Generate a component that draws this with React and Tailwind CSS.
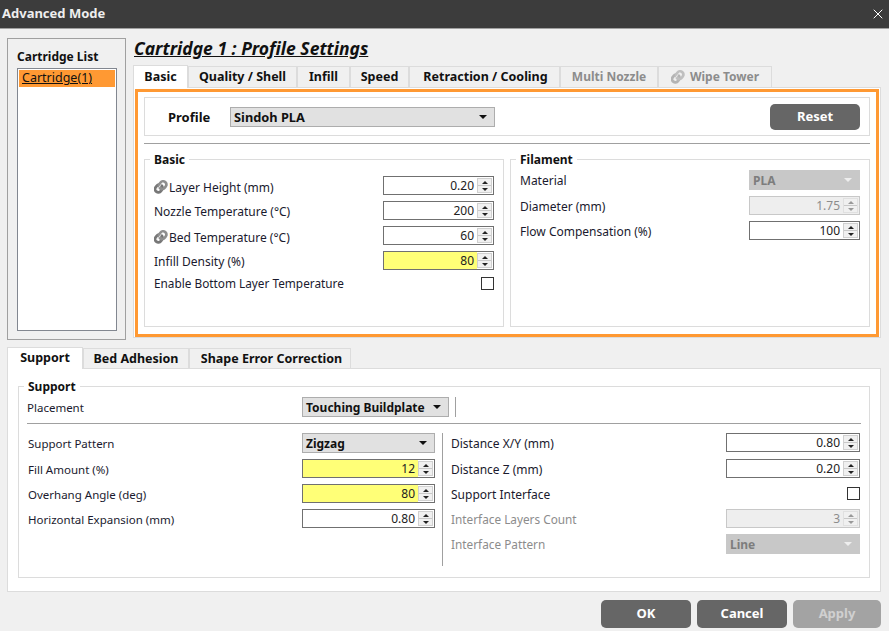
import React from 'react';
import { X } from 'lucide-react';

const FONT = { fontFamily: '"Noto Sans", sans-serif' };

// icono de clip (eslabones diagonales)
const Clip = ({ light }) => (
  <svg width="15" height="16" viewBox="0 0 15 16" className={`shrink-0 ${light ? 'opacity-50' : ''}`}>
    <g transform="rotate(-52 7 8)" fill="none">
      <rect x="0.5" y="4" width="8" height="6.4" rx="3.2" stroke="#777777" strokeWidth="2.8" />
      <rect x="5.5" y="5" width="8" height="6.4" rx="3.2" stroke="#8f8f8f" strokeWidth="2.8" />
      <path d="M2.5 6.5h9" stroke="#e8e8e8" strokeWidth="0.8" />
    </g>
  </svg>
);

const Spin = ({ value, yellow, disabled, className = '' }) => (
  <div className={`flex h-[19px] border ${disabled ? 'border-[#c8c8c8] bg-[#eeeeee] text-[#8c8c8c]' : 'border-[#707070] bg-white text-[#222]'} ${className}`}>
    <div className={`flex-1 text-right pr-[3px] text-[12px] leading-[17px] ${yellow ? 'bg-[#ffff77]' : ''}`}>{value}</div>
    <div className={`w-[15px] my-px mr-px flex flex-col border ${disabled ? 'border-[#e0e0e0]' : 'border-[#d0d0d0]'} bg-[#f0f0f0]`}>
      <div className="flex-1 flex items-center justify-center border-b border-[#c8c8c8]">
        <div className={`w-0 h-0 border-x-[3px] border-x-transparent border-b-[3px] ${disabled ? 'border-b-[#999]' : 'border-b-[#222]'}`} />
      </div>
      <div className="flex-1 flex items-center justify-center">
        <div className={`w-0 h-0 border-x-[3px] border-x-transparent border-t-[3px] ${disabled ? 'border-t-[#999]' : 'border-t-[#222]'}`} />
      </div>
    </div>
  </div>
);

const Combo = ({ value, disabled, big, className = '' }) => (
  <div className={`flex items-center justify-between h-5 border pl-[3px] pr-[7px] font-bold ${big ? 'text-[12.8px]' : 'text-[12px]'} ${disabled ? 'border-[#c8c8c8] bg-[#c8c8c8] text-[#7d7d7d]' : 'border-[#adadad] bg-[#e1e1e1] text-[#111]'} ${className}`}>
    <span className="pt-[2px]">{value}</span>
    <div className={`w-0 h-0 border-x-[4px] border-x-transparent border-t-[4px] ${disabled ? 'border-t-[#eeeeee]' : 'border-t-[#111]'}`} />
  </div>
);

const Check = () => <div className="w-[13px] h-[13px] border border-[#333] bg-white" />;

const Row = ({ label, clip, disabled, children, labelClass = 'text-[12px] pt-[2px]', className = 'h-[19px]' }) => (
  <div className={`flex items-center justify-between ${className}`}>
    <div className={`flex items-center ${labelClass} ${disabled ? 'text-[#8c8c8c]' : 'text-[#1a1a2e]'}`}>
      {clip && <Clip />}
      <span className={clip ? 'pt-[3px]' : ''}>{label}</span>
    </div>
    {children}
  </div>
);

const Group = ({ title, className = '', children }) => (
  <div className={`relative border border-[#dcdcdc] ${className}`}>
    <span className="absolute -top-[8px] left-[5px] bg-white px-1 text-[12px] font-bold leading-[16px] text-[#111]">{title}</span>
    {children}
  </div>
);

const Tab = ({ label, active, disabled, clip, small, className = '' }) => {
  const height = active ? (small ? 'h-[22px]' : 'h-[23px]') : (small ? 'h-[20px] pt-[2px]' : 'h-[21px]');
  return (
    <div className={`flex items-center justify-center gap-1 border border-b-0 border-[#dcdcdc] font-bold ${height} ${active ? 'bg-white -mb-px z-10' : 'bg-[#f0f0f0]'} ${disabled ? 'text-[#8c8c8c] text-[12px]' : 'text-[#111] text-[12.5px]'} ${className}`}>
      {clip && <Clip light />}
      {label}
    </div>
  );
};

const Btn = ({ label, disabled, className = '' }) => (
  <div className={`flex items-center justify-center rounded-[5px] text-[13px] font-bold ${disabled ? 'bg-[#a3a3a3] text-[#d0d0d0]' : 'bg-[#666666] text-white'} ${className}`}>{label}</div>
);

const SMALL = 'text-[11.5px] pt-[2px]';
const MID = 'text-[11.8px] pt-[2px]';

export default function App() {
  return (
    <div style={FONT} className="w-[889px] h-[631px] bg-[#f0f0f0] overflow-hidden flex flex-col">
      {/* barra de titulo */}
      <div className="h-[29px] shrink-0 bg-[#3c3c3c] border-b border-[#a0a0a0] flex items-center justify-between pl-[2px] pr-[3px]">
        <span className="text-[13px] font-bold text-[#eeeeee]">Advanced Mode</span>
        <X size={16} strokeWidth={1.5} className="text-white" />
      </div>

      <div className="flex pl-[7px] pt-[9px] h-[319px] shrink-0">
        {/* lista de cartuchos */}
        <div className="w-[119px] h-[302px] border border-[#a0a0a0] pt-[11px] pl-[9px] pr-[8px] pb-[8px] flex flex-col shrink-0">
          <div className="text-[12px] font-bold text-[#111] h-[18px] leading-[13px]">Cartridge List</div>
          <div className="flex-1 border border-[#828790] bg-white p-px">
            <div className="h-[17px] bg-[#ff9933] px-[3px] text-[12.5px] leading-[16px] underline text-[#111]">Cartridge(1)</div>
          </div>
        </div>

        <div className="ml-[7px] w-[748px]">
          <div className="h-[27px] text-[17.5px] leading-[20px] font-bold italic underline text-[#111] pl-px">Cartridge 1 : Profile Settings</div>
          <div className="flex items-end h-[22px]">
            <Tab label="Basic" active className="w-[55px]" />
            <Tab label="Quality / Shell" className="w-[109px]" />
            <Tab label="Infill" className="w-[53px]" />
            <Tab label="Speed" className="w-[59px]" />
            <Tab label="Retraction / Cooling" className="w-[151px] pl-[2px]" />
            <Tab label="Multi Nozzle" disabled className="w-[98px]" />
            <Tab label="Wipe Tower" disabled clip className="w-[114px]" />
          </div>
          {/* panel con borde naranja */}
          <div className="h-[251px] border border-[#dcdcdc] bg-white p-px">
            <div className="h-[248px] border-[3px] border-[#ff9933] px-[6px] pt-[5px] w-[744px]">
              <div className="h-[39px] border border-[#dcdcdc] flex items-center pt-px pl-[23px] pr-[9px]">
                <span className="w-[62px] text-[13px] font-bold text-[#111] pt-[1px]">Profile</span>
                <Combo value="Sindoh PLA" big className="w-[265px]" />
                <Btn label="Reset" className="ml-auto w-[90px] h-[26px]" />
              </div>
              <div className="mt-[7px] h-px bg-[#a0a0a0]" />
              <div className="mt-[15px] flex gap-[6px]">
                <Group title="Basic" className="w-[360px] h-[168px] px-[9px] pt-[16px] flex flex-col gap-[6px]">
                  <Row label="Layer Height (mm)" clip><Spin value="0.20" className="w-[111px]" /></Row>
                  <Row label="Nozzle Temperature (°C)"><Spin value="200" className="w-[111px]" /></Row>
                  <Row label="Bed Temperature (°C)" clip><Spin value="60" className="w-[111px]" /></Row>
                  <Row label="Infill Density (%)"><Spin value="80" yellow className="w-[111px]" /></Row>
                  <Row label="Enable Bottom Layer Temperature" labelClass={MID} className="h-[14px]"><Check /></Row>
                </Group>
                <Group title="Filament" className="w-[360px] h-[168px] px-[9px] pt-[10px] flex flex-col gap-[6px]">
                  <Row label="Material" className="h-5"><Combo value="PLA" disabled className="w-[111px]" /></Row>
                  <Row label="Diameter (mm)"><Spin value="1.75" disabled className="w-[111px]" /></Row>
                  <Row label="Flow Compensation (%)"><Spin value="100" className="w-[111px]" /></Row>
                </Group>
              </div>
            </div>
          </div>
        </div>
      </div>

      {/* seccion inferior */}
      <div className="pl-[7px] w-[881px]">
        <div className="flex items-end h-[20px]">
          <Tab label="Support" active small className="w-[76px]" />
          <Tab label="Bed Adhesion" small className="w-[106px]" />
          <Tab label="Shape Error Correction" small className="w-[162px] pl-[3px]" />
        </div>
        <div className="h-[224px] border border-[#dcdcdc] bg-white pl-[10px] pt-[17px]">
          <Group title="Support" className="w-[852px] h-[192px] px-[9px] pt-[10px]">
            <div className="flex items-center h-5 w-[834px] -ml-px">
              <span className={`w-[275px] ${SMALL} text-[#1a1a2e]`}>Placement</span>
              <Combo value="Touching Buildplate" className="w-[147px]" />
              <div className="ml-[6px] w-px h-5 bg-[#a0a0a0]" />
            </div>
            <div className="mt-[6px] h-px w-[834px] -ml-px bg-[#a0a0a0]" />
            <div className="mt-[9px] flex">
              <div className="w-[407px] flex flex-col gap-[6px]">
                <Row label="Support Pattern" labelClass={SMALL} className="h-5"><Combo value="Zigzag" className="w-[133px]" /></Row>
                <Row label="Fill Amount (%)" labelClass={SMALL}><Spin value="12" yellow className="w-[133px]" /></Row>
                <Row label="Overhang Angle (deg)" labelClass={SMALL}><Spin value="80" yellow className="w-[133px]" /></Row>
                <Row label="Horizontal Expansion (mm)" labelClass={SMALL}><Spin value="0.80" className="w-[133px]" /></Row>
              </div>
              <div className="ml-[7px] w-px h-[133px] bg-[#a0a0a0]" />
              <div className="ml-[8px] w-[409px] flex flex-col gap-[6px]">
                <Row label="Distance X/Y (mm)" className="h-5"><Spin value="0.80" className="w-[134px] self-start" /></Row>
                <Row label="Distance Z (mm)"><Spin value="0.20" className="w-[134px]" /></Row>
                <Row label="Support Interface"><Check /></Row>
                <Row label="Interface Layers Count" disabled labelClass={MID}><Spin value="3" disabled className="w-[134px]" /></Row>
                <Row label="Interface Pattern" disabled labelClass={MID} className="h-5"><Combo value="Line" disabled className="w-[134px]" /></Row>
              </div>
            </div>
          </Group>
        </div>
        <div className="mt-[8px] flex justify-end gap-[6px]">
          <Btn label="OK" className="w-[90px] h-7" />
          <Btn label="Cancel" className="w-[90px] h-7" />
          <Btn label="Apply" disabled className="w-[88px] h-7" />
        </div>
      </div>
    </div>
  );
}
